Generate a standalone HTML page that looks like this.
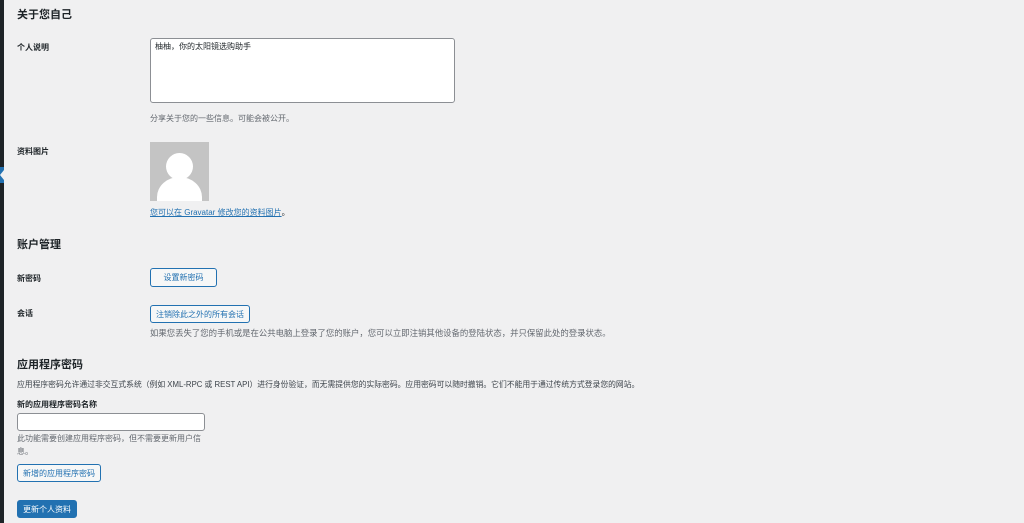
<!DOCTYPE html>
<html><head><meta charset="utf-8"><style>
body{margin:0;width:1024px;height:523px;background:#f0f0f1;font-family:"Liberation Sans","Noto Sans CJK SC",sans-serif;color:#1d2327;position:relative;overflow:hidden;font-size:8px}
.a{position:absolute;white-space:nowrap;line-height:1}
h2{position:absolute;margin:0;font-size:11px;font-weight:bold;line-height:1}
.l{font-weight:bold}
.d{color:#646970}
.btn{position:absolute;border:1px solid #2271b1;color:#2271b1;background:#f6f7f7;border-radius:3px;box-sizing:border-box;font-size:8px;display:flex;align-items:center;justify-content:center}
</style></head><body>
<div style="position:absolute;left:0;top:0;width:4px;height:523px;background:#1d2327"></div>
<div style="position:absolute;left:0;top:167px;width:4px;height:16px;background:#2271b1"></div>
<div style="position:absolute;left:0;top:170px;width:0;height:0;border-top:5px solid transparent;border-bottom:5px solid transparent;border-right:4px solid #f0f0f1"></div>
<h2 style="left:17px;top:10px">关于您自己</h2>
<div class="a l" style="left:17px;top:44px">个人说明</div>
<div style="position:absolute;left:150px;top:38px;width:305px;height:65px;box-sizing:border-box;background:#fff;border:1px solid #8c8f94;border-radius:3px"></div>
<div class="a" style="left:155px;top:43px">柚柚，你的太阳镜选购助手</div>
<div class="a d" style="left:150px;top:115px">分享关于您的一些信息。可能会被公开。</div>
<div class="a l" style="left:17px;top:148px">资料图片</div>
<div style="position:absolute;left:150px;top:142px;width:59px;height:59px;background:#c4c4c4;overflow:hidden">
<div style="position:absolute;left:16px;top:11px;width:27px;height:27px;border-radius:50%;background:#fff"></div>
<div style="position:absolute;left:7px;top:35px;width:45px;height:40px;border-radius:50% 50% 0 0;background:#fff"></div></div>
<div class="a" style="left:150px;top:209px;color:#2271b1"><span style="text-decoration:underline">您可以在 Gravatar 修改您的资料图片</span><span style="color:#1d2327">。</span></div>
<h2 style="left:17px;top:240px">账户管理</h2>
<div class="a l" style="left:17px;top:275px">新密码</div>
<div class="btn" style="left:150px;top:268px;width:67px;height:19px">设置新密码</div>
<div class="a l" style="left:17px;top:310px">会话</div>
<div class="btn" style="left:150px;top:305px;width:100px;height:18px">注销除此之外的所有会话</div>
<div class="a d" style="left:150px;top:329px;font-size:8.4px">如果您丢失了您的手机或是在公共电脑上登录了您的账户，您可以立即注销其他设备的登陆状态，并只保留此处的登录状态。</div>
<h2 style="left:17px;top:360px">应用程序密码</h2>
<div class="a" style="left:17px;top:381px;color:#3c434a;font-size:7.8px">应用程序密码允许通过非交互式系统（例如 XML-RPC 或 REST API）进行身份验证，而无需提供您的实际密码。应用密码可以随时撤销。它们不能用于通过传统方式登录您的网站。</div>
<div class="a l" style="left:17px;top:401px">新的应用程序密码名称</div>
<div style="position:absolute;left:17px;top:413px;width:188px;height:18px;box-sizing:border-box;background:#fff;border:1px solid #8c8f94;border-radius:3px"></div>
<div class="a d" style="left:17px;top:435px">此功能需要创建应用程序密码，但不需要更新用户信</div>
<div class="a d" style="left:17px;top:448px">息。</div>
<div class="btn" style="left:17px;top:464px;width:84px;height:18px">新增的应用程序密码</div>
<div class="btn" style="left:17px;top:500px;width:60px;height:18px;background:#2271b1;color:#fff">更新个人资料</div>
</body></html>
